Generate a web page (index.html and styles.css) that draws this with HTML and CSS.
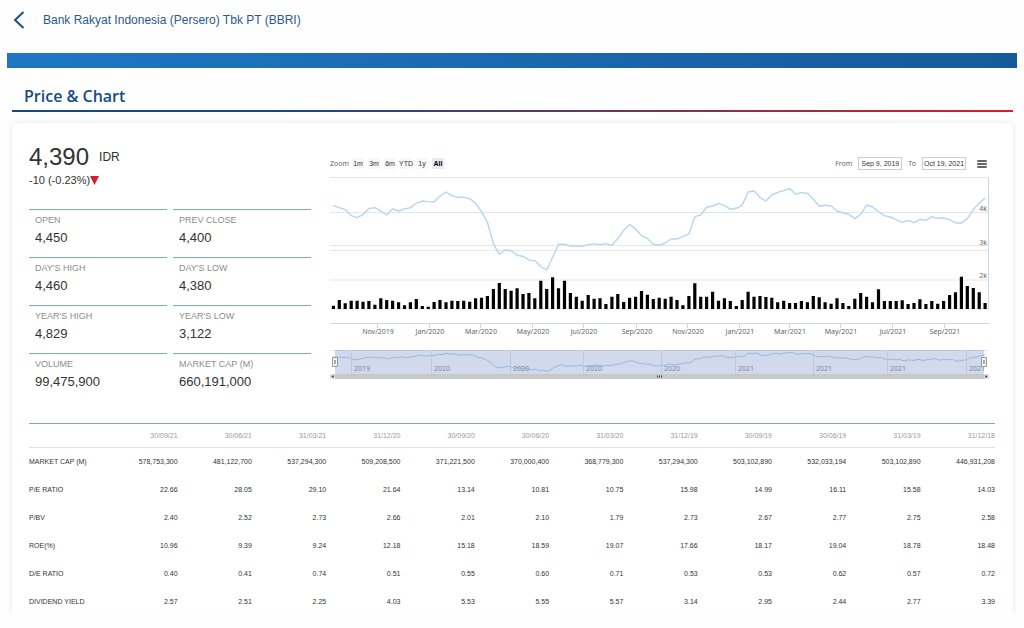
FILE: index.html
```html
<!DOCTYPE html>
<html lang="en">
<head>
<meta charset="utf-8">
<title>Bank Rakyat Indonesia (Persero) Tbk PT (BBRI)</title>
<link rel="stylesheet" href="styles.css">
</head>
<body>
<header class="topbar">
  <button class="back" type="button" aria-label="Back">
    <svg width="12" height="18" viewBox="0 0 12 18"><path d="M10.500 1 2 9l8.500 8" /></svg>
  </button>
  <h1 class="company">Bank Rakyat Indonesia (Persero) Tbk PT (BBRI)</h1>
</header>
<div class="banner"></div>
<main class="content">
  <h2 class="section-title">Price &amp; Chart</h2>
  <section class="card">
    <div class="overview">
      <div class="quote">
        <div class="price"><span class="amount">4,390</span><span class="currency">IDR</span></div>
        <div class="change">-10 (-0.23%)<svg width="9" height="9" viewBox="0 0 9 9"><path d="M0 0h9L4.500 9z"/></svg></div>
        <dl class="stats">
          <div class="stat"><dt>OPEN</dt><dd>4,450</dd></div>
          <div class="stat"><dt>PREV CLOSE</dt><dd>4,400</dd></div>
          <div class="stat"><dt>DAY'S HIGH</dt><dd>4,460</dd></div>
          <div class="stat"><dt>DAY'S LOW</dt><dd>4,380</dd></div>
          <div class="stat"><dt>YEAR'S HIGH</dt><dd>4,829</dd></div>
          <div class="stat"><dt>YEAR'S LOW</dt><dd>3,122</dd></div>
          <div class="stat"><dt>VOLUME</dt><dd>99,475,900</dd></div>
          <div class="stat"><dt>MARKET CAP (M)</dt><dd>660,191,000</dd></div>
        </dl>
      </div>
      <div class="chart">
        <div class="controls">
          <span class="controls-label">Zoom</span>
          <div class="ranges">
            <button type="button">1m</button>
            <button type="button">3m</button>
            <button type="button">6m</button>
            <button type="button">YTD</button>
            <button type="button">1y</button>
            <button type="button" class="active">All</button>
          </div>
          <div class="dates">
            <label for="from">From</label>
            <input id="from" type="text" value="Sep 9, 2019">
            <label for="to">To</label>
            <input id="to" type="text" value="Oct 19, 2021">
          </div>
          <button class="menu" type="button" aria-label="Chart menu">
            <svg width="10" height="10" viewBox="0 0 10 10"><path d="M1 2h8M1 5h8M1 8h8"/></svg>
          </button>
        </div>
        <svg class="plot" viewBox="0 0 660 205" role="img" aria-label="Price and volume">
          <g id="grid" class="grid"></g>
          <path class="axis" d="M1 148.500H659M658.500 3V134"/>
          <path id="month-ticks" class="axis"/>
          <path id="price-line" class="price-line"/>
          <path id="volume-bars" class="bars"/>
          <g id="price-labels" class="labels end"></g>
          <g id="month-labels" class="labels middle"></g>
          <path class="grid" d="M0 175.500H659"/>
          <path id="nav-line" class="nav-line"/>
          <path id="nav-ticks" class="nav-ticks"/>
          <g id="nav-labels" class="nav-labels"></g>
          <rect class="nav-mask" x="5" y="175" width="649" height="24"/>
          <rect class="scroll" x="0" y="199" width="659" height="5"/>
          <path class="scroll-end" d="M0 199h5v5h-5zM654 199h5v5h-5z"/>
          <path class="scroll-arrow" d="M3.500 200v3L1.500 201.500zM655.500 200v3l2-1.500z"/>
          <path class="grip" d="M327.500 200.500v2M329.500 200.500v2M331.500 200.500v2"/>
          <g class="handle">
            <path d="M2.500 182.500h5v9h-5zM651.500 182.500h5v9h-5z"/>
            <path d="M4.500 185v4M5.500 185v4M653.500 185v4M654.500 185v4"/>
          </g>
        </svg>
      </div>
    </div>
    <table class="history">
      <thead>
        <tr><td></td><th scope="col">30/09/21</th><th scope="col">30/06/21</th><th scope="col">31/03/21</th><th scope="col">31/12/20</th><th scope="col">30/09/20</th><th scope="col">30/06/20</th><th scope="col">31/03/20</th><th scope="col">31/12/19</th><th scope="col">30/09/19</th><th scope="col">30/06/19</th><th scope="col">31/03/19</th><th scope="col">31/12/18</th></tr>
      </thead>
      <tbody>
        <tr><th scope="row">MARKET CAP (M)</th><td>578,753,300</td><td>481,122,700</td><td>537,294,300</td><td>509,208,500</td><td>371,221,500</td><td>370,000,400</td><td>368,779,300</td><td>537,294,300</td><td>503,102,890</td><td>532,033,194</td><td>503,102,890</td><td>446,931,208</td></tr>
        <tr><th scope="row">P/E RATIO</th><td>22.66</td><td>28.05</td><td>29.10</td><td>21.64</td><td>13.14</td><td>10.81</td><td>10.75</td><td>15.98</td><td>14.99</td><td>16.11</td><td>15.58</td><td>14.03</td></tr>
        <tr><th scope="row">P/BV</th><td>2.40</td><td>2.52</td><td>2.73</td><td>2.66</td><td>2.01</td><td>2.10</td><td>1.79</td><td>2.73</td><td>2.67</td><td>2.77</td><td>2.75</td><td>2.58</td></tr>
        <tr><th scope="row">ROE(%)</th><td>10.96</td><td>9.39</td><td>9.24</td><td>12.18</td><td>15.18</td><td>18.59</td><td>19.07</td><td>17.66</td><td>18.17</td><td>19.04</td><td>18.78</td><td>18.48</td></tr>
        <tr><th scope="row">D/E RATIO</th><td>0.40</td><td>0.41</td><td>0.74</td><td>0.51</td><td>0.55</td><td>0.60</td><td>0.71</td><td>0.53</td><td>0.53</td><td>0.62</td><td>0.57</td><td>0.72</td></tr>
        <tr><th scope="row">DIVIDEND YIELD</th><td>2.57</td><td>2.51</td><td>2.25</td><td>4.03</td><td>5.53</td><td>5.55</td><td>5.57</td><td>3.14</td><td>2.95</td><td>2.44</td><td>2.77</td><td>3.39</td></tr>
      </tbody>
    </table>
  </section>
</main>
<script src="chart.js"></script>
</body>
</html>
```

FILE: styles.css
```css
* { box-sizing: border-box; }

body {
  margin: 0;
  background: #fefefe;
  color: #333;
  font-family: "Liberation Sans", Arial, sans-serif;
}

h1, h2, dl, dd { margin: 0; }

button {
  padding: 0;
  border: 0;
  background: none;
  font-family: inherit;
  color: inherit;
}

button svg { display: block; }

.topbar {
  display: flex;
  align-items: center;
  gap: 18px;
  height: 53px;
  padding: 0 13px 13px;
}

.back path {
  fill: none;
  stroke: #1d4f86;
  stroke-width: 2;
}

.company {
  color: #2a5a8c;
  font-size: 12px;
  font-weight: 400;
  line-height: 16px;
}

.banner {
  height: 15px;
  margin: 0 7px;
  background: linear-gradient(90deg, #1f77c4, #165a9a);
}

.content {
  padding: 17px 11px 0 12px;
  overflow: hidden;
}

.section-title {
  padding: 0 12px 2px;
  border-bottom: 2px solid;
  border-image: linear-gradient(90deg, #134a83 25%, #d4202e) 1;
  color: #164c86;
  font: 600 16px/23px "Open Sans", "Noto Sans", sans-serif;
}

.card {
  margin-top: 11px;
  padding: 20px 18px 0 17px;
  border-radius: 5px 5px 0 0;
  background: #fff;
  box-shadow: 0 0 5px 1px rgba(0, 0, 0, 0.07);
}

.overview {
  display: grid;
  grid-template-columns: 282px 1fr;
  gap: 19px;
}

.price {
  display: flex;
  align-items: center;
  gap: 10px;
  line-height: 28px;
}

.amount { font-size: 24px; }
.currency { font-size: 12px; }

.change {
  display: flex;
  align-items: center;
  margin-top: 1px;
  font-size: 11px;
  line-height: 16px;
}

.change path { fill: #d0202e; }

.stats {
  display: grid;
  grid-template-columns: 1fr 1fr;
  column-gap: 6px;
  margin-top: 21px;
}

.stat {
  height: 48px;
  padding: 4px 6px 0;
  border-top: 1px solid #7ba6d2;
}

.stat dt {
  color: #8c8c8c;
  font-size: 9px;
  line-height: 12px;
}

.stat dd {
  margin-top: 4px;
  font-size: 13px;
  line-height: 16px;
}

.chart { padding: 14px 5px 0 0; }

.controls {
  display: flex;
  align-items: center;
  height: 13px;
  margin-bottom: 5px;
  color: #666;
  font: 7px/10px "Noto Sans", sans-serif;
}

.ranges {
  display: flex;
  gap: 4px;
  margin-left: 3px;
}

.ranges button {
  display: flex;
  justify-content: center;
  width: 12px;
  background: #f7f7f7;
  color: #333;
  font: 7px/11px "Liberation Sans", Arial, sans-serif;
}

.ranges .active {
  background: #e6ebf5;
  color: #000;
  font-weight: 700;
}

.dates {
  display: flex;
  align-items: center;
  gap: 6px;
  margin-left: auto;
}

.dates input {
  width: 44px;
  height: 13px;
  padding: 0;
  border: 1px solid #ccc;
  background: #fff;
  color: #333;
  font: 7px/11px "Liberation Sans", Arial, sans-serif;
  text-align: center;
}

.menu { margin: 0 3px 0 11px; }

.menu path {
  fill: none;
  stroke: #666;
  stroke-width: 2;
  stroke-linecap: round;
}

.plot {
  display: block;
  width: 100%;
  font: 7px "Noto Sans", sans-serif;
}

.grid, .axis { fill: none; stroke: #e6e6e6; }
.axis { stroke: #ccd6eb; }
.price-line { fill: none; stroke: #b5d5f5; stroke-width: 1.400; stroke-linejoin: round; }
.bars { fill: #000; }
.labels { fill: #666; }
.end { text-anchor: end; }
.middle { text-anchor: middle; }
.nav-line { fill: none; stroke: #a9cdf3; }
.nav-ticks { stroke: #e6e6e6; }
.nav-labels { fill: #888; }
.nav-mask { fill: rgba(102, 133, 194, 0.3); }
.scroll { fill: #c8c8c8; }
.scroll-end { fill: #dedede; }
.scroll-arrow { fill: #222; }
.grip { stroke: #444; }
.handle path { fill: #f2f2f2; stroke: #999; }
.handle path + path { stroke: #aaa; }

.history {
  width: 100%;
  margin-top: 22px;
  border-collapse: collapse;
  border-top: 1px solid #7ba6cc;
  table-layout: fixed;
  font-size: 7px;
  line-height: 8px;
}

.history th, .history td {
  padding: 10px 0;
  font-weight: 400;
  text-align: right;
  white-space: nowrap;
}

.history thead th, .history thead td {
  padding: 8px 0;
  border-bottom: 1px solid #e4e4e4;
  color: #999;
}

.history tbody th { text-align: left; }

.history tr:last-child > * { padding-bottom: 7px; }
```

FILE: chart.js
```js
const prices = [
  4200, 4140, 4080, 3900, 3840, 3930, 4110, 4140, 4040, 3920, 4110, 4040, 4100, 4140, 4270, 4340,
  4320, 4310, 4480, 4610, 4500, 4450, 4450, 4410, 4270, 4020, 3700, 3060, 2740, 2870, 2850, 2710,
  2680, 2570, 2550, 2370, 2270, 2650, 3040, 3040, 2990, 2990, 2980, 3030, 3060, 3030, 3060, 3010,
  3210, 3460, 3630, 3500, 3300, 3210, 3040, 3010, 3080, 3200, 3200, 3270, 3350, 3870, 3920, 4150,
  4190, 4260, 4210, 4090, 4120, 4210, 4610, 4640, 4450, 4340, 4520, 4600, 4650, 4710, 4550, 4590,
  4570, 4390, 4180, 4210, 4190, 4040, 3980, 3940, 3810, 3940, 4220, 4160, 4020, 3900, 3860, 3780,
  3700, 3760, 3690, 3790, 3760, 3870, 3820, 3830, 3780, 3680, 3680, 3810, 4080, 4270, 4430
];
const volumes = [
  10, 27, 17, 25, 25, 22, 24, 13, 32, 27, 25, 20, 11, 20, 30, 9, 7, 21, 27, 20, 25, 24, 25, 22,
  32, 34, 39, 60, 78, 60, 55, 62, 45, 48, 32, 85, 60, 95, 62, 85, 48, 37, 25, 42, 31, 32, 15, 37,
  45, 21, 34, 37, 54, 43, 30, 34, 31, 37, 27, 11, 39, 77, 37, 37, 52, 25, 32, 24, 9, 27, 52, 37,
  39, 36, 34, 20, 25, 18, 18, 24, 20, 39, 35, 20, 16, 32, 18, 9, 31, 48, 37, 20, 59, 24, 24, 24,
  26, 15, 18, 29, 15, 24, 16, 24, 42, 50, 97, 69, 63, 50, 18
];
const months = [
  [47, "Nov/2019"], [99, "Jan/2020"], [150, "Mar/2020"], [202, "May/2020"], [253, "Jul/2020"],
  [306, "Sep/2020"], [357, "Nov/2020"], [409, "Jan/2021"], [459, "Mar/2021"], [510, "May/2021"],
  [562, "Jul/2021"], [614, "Sep/2021"]
];
const years = [
  [22, 2019], [102, 2020], [181, 2020], [254, 2020], [332, 2020],
  [406, 2021], [484, 2021], [558, 2021], [637, 2021]
];

const byId = (id) => document.getElementById(id);
const step = 651.7 / (prices.length - 1);
const xAt = (i) => 3.4 + i * step;
const text = (x, y, s) => `<text x="${x}" y="${y}">${s}</text>`;
const line = (points) => "M" + points.map((p) => p.map((n) => n.toFixed(1)).join(" ")).join("L");

byId("grid").innerHTML = [2.5, 37.5, 70.5, 75.5, 105, 134]
  .map((y) => `<path d="M0 ${y}H659"/>`).join("");
byId("price-line").setAttribute("d", line(prices.map((p, i) => [xAt(i), 37.3 - (p - 4000) / 30])));
byId("volume-bars").setAttribute("d", volumes.map((v, i) =>
  `M${(xAt(i) - 1.6).toFixed(1)} 134v${(-v / 3).toFixed(1)}h3.2V134z`).join(""));
byId("price-labels").innerHTML = text(657, 36, "4k") + text(657, 70, "3k") + text(657, 103, "2k");
byId("month-ticks").setAttribute("d", months.map(([x]) => `M${x + 0.5} 148v5`).join(""));
byId("month-labels").innerHTML = months.map(([x, s]) => text(x + 1, 159, s)).join("");

// The overview strip has daily ripple on top of the weekly closes.
const daily = [];
prices.forEach((p, i) => {
  const next = prices[i + 1] ?? p;
  daily.push([xAt(i), p], [xAt(i + 0.5), (p + next) / 2 + (i % 3 - 1) * 90]);
});
daily.pop();
byId("nav-line").setAttribute("d", line(daily.map(([x, p]) => [x, 183.1 - (p - 4000) * 0.0077])));
byId("nav-ticks").setAttribute("d", years.map(([x]) => `M${x - 0.5} 176v23`).join(""));
byId("nav-labels").innerHTML = years.map(([x, s]) => text(x + 2, 196, s)).join("");
```
